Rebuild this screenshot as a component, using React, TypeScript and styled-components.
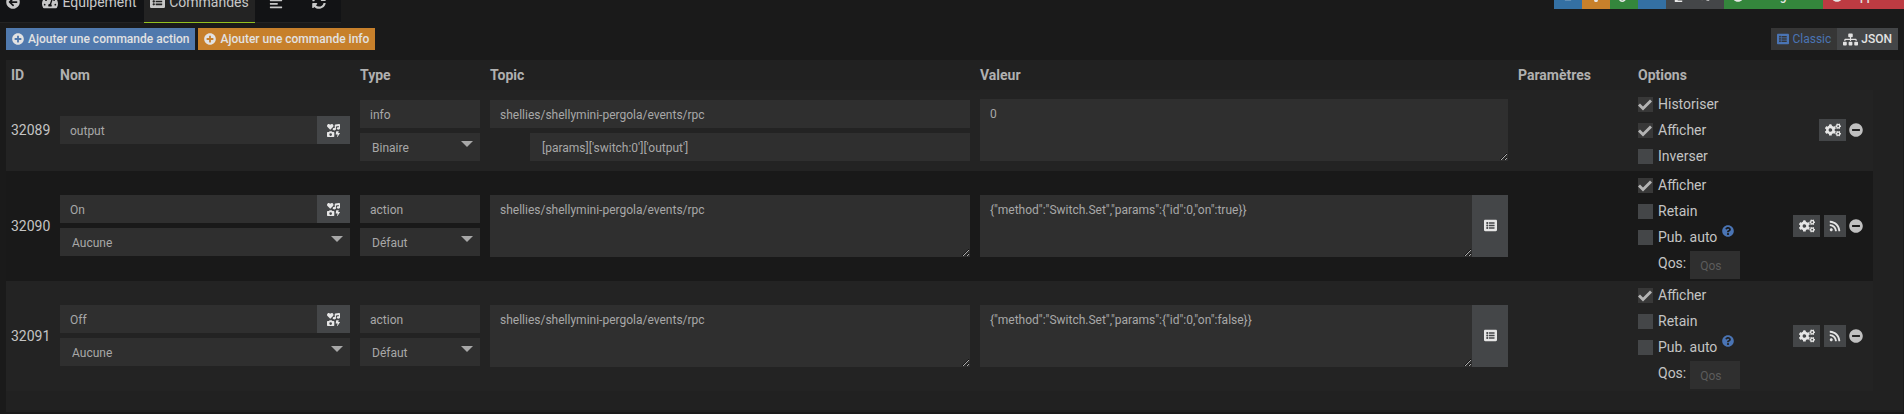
import React from 'react';
import styled, { createGlobalStyle, css } from 'styled-components';
import {
  FaAlignLeft, FaArrowCircleLeft, FaArrowsAltH, FaCheckCircle, FaCogs, FaCopy, FaIcons, FaLightbulb, FaListAlt,
  FaMinusCircle, FaPaperclip, FaPlusCircle, FaQuestionCircle, FaRss, FaSitemap, FaSyncAlt, FaTachometerAlt, FaUsers,
} from 'react-icons/fa';

const Global = createGlobalStyle`
  *, *::before, *::after { box-sizing: border-box; }
  body {
    margin: 0;
    background: #1a1a1a;
    color: #c4c4c4;
    font: 14px/20px Roboto, "Liberation Sans", sans-serif;
  }
  button, input, select, textarea { font: inherit; color: inherit; border: 0; border-radius: 0; margin: 0; }
  svg { flex: none; }
`;

const Header = styled.header`
  display: flex;
  justify-content: space-between;
  align-items: flex-start;
  height: 23px;
  overflow: hidden;
`;

const Tabs = styled.nav`
  display: flex;
  align-items: flex-end;
  height: 23px;
  margin-left: -9px;
`;

const Tab = styled.a<{ $active?: boolean; $wide: number }>`
  display: flex;
  flex: none;
  align-items: center;
  justify-content: center;
  gap: 4px;
  width: ${(p) => p.$wide}px;
  height: 42px;
  background: ${(p) => (p.$active ? '#232323' : '#121315')};
  border-bottom: 1px solid ${(p) => (p.$active ? '#94c11f' : '#232323')};
  color: #c8c8c8;
  text-decoration: none;
`;

const Actions = styled.div`
  display: flex;
  height: 9px;
  align-items: flex-end;
`;

const tones = {
  blue: '#3470a3',
  orange: '#c7802b',
  green: '#34863c',
  gray: '#444648',
  red: '#bd3b42',
};

const HeadButton = styled.button<{ $tone: keyof typeof tones; $wide: number }>`
  display: flex;
  align-items: center;
  gap: 3px;
  width: ${(p) => p.$wide}px;
  height: 26px;
  padding: 0 0 0 8px;
  background: ${(p) => tones[p.$tone]};
  color: #e6e6e6;
  font-size: 12px;
  font-weight: 500;
`;

const Toolbar = styled.div`
  display: flex;
  justify-content: space-between;
  padding: 5px 6px 10px;
`;

const Group = styled.div<{ $gap?: number }>`
  display: flex;
  gap: ${(p) => p.$gap ?? 0}px;
`;

const ToolButton = styled.button<{ $kind: 'action' | 'info' | 'muted' | 'plain' }>`
  display: flex;
  align-items: center;
  gap: 3px;
  height: 22px;
  padding: 0 6px;
  font-size: 12px;
  font-weight: 500;
  color: #e2e2e2;
  ${(p) => p.$kind === 'action' && css`background: #5079ad; gap: 4px;`}
  ${(p) => p.$kind === 'info' && css`background: #c7802b; gap: 4px;`}
  ${(p) => p.$kind === 'muted' && css`background: #363636; color: #4a74b4; font-weight: 400;`}
  ${(p) => p.$kind === 'plain' && css`background: #444648;`}
`;

const Panel = styled.main`
  margin: 0 1px 0 6px;
  padding: 0 30px 21px 0;
  background: #212121;
`;

const Table = styled.table`
  width: 100%;
  min-width: 1500px;
  table-layout: fixed;
  border-collapse: collapse;
`;

const Th = styled.th<{ $wide?: number }>`
  width: ${(p) => (p.$wide ? `${p.$wide}px` : 'auto')};
  height: 30px;
  padding: 0 5px;
  color: #b0b0b0;
  font-weight: 700;
  text-align: left;
`;

const Row = styled.tr`
  background: #232323;
  &:nth-child(even) { background: #191919; }
`;

const Td = styled.td`
  padding: 1px 5px 2px;
  vertical-align: middle;
`;

const Stack = styled.div`
  display: flex;
  flex-direction: column;
  gap: 5px;
`;

const Line = styled.div<{ $indent?: boolean }>`
  display: flex;
  padding-left: ${(p) => (p.$indent ? 40 : 0)}px;
`;

const field = css`
  display: block;
  flex: 0 1 auto;
  width: 100%;
  min-width: 0;
  background: #2f2f2f;
  color: #a8a8a8;
  font-size: 12px;
  line-height: 18px;
  outline: none;
`;

const Input = styled.input<{ $pad?: number }>`
  ${field}
  height: 28px;
  padding: 2px ${(p) => p.$pad ?? 10}px 0;
  &::placeholder { color: #5c5c5c; opacity: 1; }
`;

const Area = styled.textarea`
  ${field}
  height: 62px;
  padding: 6px 10px;
  resize: vertical;
`;

const SelectBox = styled.div`
  position: relative;
  &::after {
    content: '';
    position: absolute;
    top: 8px;
    right: 7px;
    border: 6px solid transparent;
    border-top-color: #a8a8a8;
    border-bottom: 0;
    pointer-events: none;
  }
`;

const Select = styled.select`
  ${field}
  height: 28px;
  padding: 2px 24px 0 12px;
  appearance: none;
`;

const Addon = styled.button<{ $wide: number }>`
  display: flex;
  flex: none;
  align-items: center;
  justify-content: center;
  width: ${(p) => p.$wide}px;
  padding: 0;
  background: #444648;
  color: #e6e6e6;
  font-size: 12px;
`;

const OptionsCell = styled.div`
  display: flex;
  align-items: center;
  justify-content: space-between;
`;

const Check = styled.label`
  display: flex;
  align-items: center;
  gap: 5px;
  height: 26px;
`;

const Box = styled.input`
  appearance: none;
  width: 15px;
  height: 15px;
  background: #444648;
  &:checked { background: #383838; }
  &:checked::before {
    content: '';
    display: block;
    width: 15px;
    height: 15px;
    background: #b4b4b4;
    clip-path: polygon(0 9px, 2px 7px, 5px 10px, 12px 3px, 14px 5px, 5px 14px);
  }
`;

const Help = styled.sup`
  display: flex;
  align-self: flex-start;
  margin-top: 1px;
  color: #4a74b4;
  font-size: 12px;
`;

const Qos = styled.label`
  display: flex;
  align-items: flex-start;
  gap: 4px;
  height: 29px;
  padding: 1px 0 0 20px;
  line-height: 24px;
`;

const QosField = styled.div`
  width: 50px;
`;

const RowActions = styled.div`
  display: flex;
  align-items: center;
  padding-right: 5px;
`;

const IconButton = styled.button<{ $wide: number; $gap: number }>`
  display: flex;
  align-items: center;
  justify-content: center;
  width: ${(p) => p.$wide}px;
  height: 22px;
  margin-right: ${(p) => p.$gap}px;
  padding: 0;
  background: #444648;
  color: #e6e6e6;
  font-size: 12px;
`;

const RemoveButton = styled.button`
  display: flex;
  padding: 0;
  background: none;
  color: #c0c0c0;
  font-size: 14px;
`;

type Option = { label: string; on?: boolean; help?: boolean };
type Command = {
  id: string;
  name: string;
  type: 'info' | 'action';
  subtype: string;
  topic: string;
  path?: string;
  value: string;
  options: Option[];
};

const TOPIC = 'shellies/shellymini-pergola/events/rpc';
const actionOptions: Option[] = [
  { label: 'Afficher', on: true },
  { label: 'Retain' },
  { label: 'Pub. auto', help: true },
];

const commands: Command[] = [
  {
    id: '32089', name: 'output', type: 'info', subtype: 'Binaire', topic: TOPIC,
    path: "[params]['switch:0']['output']", value: '0',
    options: [{ label: 'Historiser', on: true }, { label: 'Afficher', on: true }, { label: 'Inverser' }],
  },
  {
    id: '32090', name: 'On', type: 'action', subtype: 'Défaut', topic: TOPIC,
    value: '{"method":"Switch.Set","params":{"id":0,"on":true}}', options: actionOptions,
  },
  {
    id: '32091', name: 'Off', type: 'action', subtype: 'Défaut', topic: TOPIC,
    value: '{"method":"Switch.Set","params":{"id":0,"on":false}}', options: actionOptions,
  },
];

function Dropdown({ value, label }: { value: string; label: string }) {
  return (
    <SelectBox>
      <Select aria-label={label} defaultValue={value}>
        <option>{value}</option>
      </Select>
    </SelectBox>
  );
}

function CommandRow({ cmd }: { cmd: Command }) {
  const isAction = cmd.type === 'action';
  return (
    <Row>
      <Td>{cmd.id}</Td>
      <Td>
        <Stack>
          <Line>
            <Input aria-label="Nom" defaultValue={cmd.name} />
            <Addon $wide={33} aria-label="Icône"><FaIcons size={13} /></Addon>
          </Line>
          {isAction && <Dropdown label="Commande liée" value="Aucune" />}
        </Stack>
      </Td>
      <Td>
        <Stack>
          <Input aria-label="Type" defaultValue={cmd.type} />
          <Dropdown label="Sous-type" value={cmd.subtype} />
        </Stack>
      </Td>
      <Td>
        {isAction ? (
          <Area aria-label="Topic" defaultValue={cmd.topic} />
        ) : (
          <Stack>
            <Input aria-label="Topic" defaultValue={cmd.topic} />
            <Line $indent><Input aria-label="Chemin JSON" $pad={12} defaultValue={cmd.path} /></Line>
          </Stack>
        )}
      </Td>
      <Td>
        <Line>
          <Area aria-label="Valeur" defaultValue={cmd.value} />
          {isAction && <Addon $wide={36} aria-label="Choisir une commande"><FaListAlt size={13} /></Addon>}
        </Line>
      </Td>
      <Td />
      <Td>
        <OptionsCell>
          <div>
            {cmd.options.map((o) => (
              <Check key={o.label}>
                <Box type="checkbox" defaultChecked={o.on} />
                {o.label}
                {o.help && <Help><FaQuestionCircle /></Help>}
              </Check>
            ))}
            {isAction && (
              <Qos>
                Qos:
                <QosField><Input placeholder="Qos" /></QosField>
              </Qos>
            )}
          </div>
          <RowActions>
            <IconButton $wide={27} $gap={isAction ? 4 : 3} aria-label="Configurer"><FaCogs size={16} /></IconButton>
            {isAction && <IconButton $wide={22} $gap={3} aria-label="Tester"><FaRss /></IconButton>}
            <RemoveButton aria-label="Supprimer"><FaMinusCircle /></RemoveButton>
          </RowActions>
        </OptionsCell>
      </Td>
    </Row>
  );
}

export default function App() {
  return (
    <>
      <Global />
      <Header>
        <Tabs>
          <Tab href="#" $wide={44} aria-label="Retour"><FaArrowCircleLeft size={14} /></Tab>
          <Tab href="#" $wide={109}><FaTachometerAlt size={16} />Equipement</Tab>
          <Tab href="#" $wide={111} $active><FaListAlt size={15} />Commandes</Tab>
          <Tab href="#" $wide={42} aria-label="Aligner"><FaAlignLeft size={14} /></Tab>
          <Tab href="#" $wide={44} aria-label="Actualiser"><FaSyncAlt size={14} /></Tab>
        </Tabs>
        <Actions>
          <HeadButton $tone="blue" $wide={28} aria-label="Équipements"><FaUsers /></HeadButton>
          <HeadButton $tone="orange" $wide={28} aria-label="Suggestions"><FaLightbulb /></HeadButton>
          <HeadButton $tone="green" $wide={28} aria-label="Pièces jointes"><FaPaperclip /></HeadButton>
          <HeadButton $tone="blue" $wide={28} aria-label="Relations"><FaArrowsAltH /></HeadButton>
          <HeadButton $tone="gray" $wide={24} aria-label="Dupliquer"><FaCopy /></HeadButton>
          <HeadButton $tone="gray" $wide={34} aria-label="Configuration"><FaCogs /></HeadButton>
          <HeadButton $tone="green" $wide={99}><FaCheckCircle />Sauvegarder</HeadButton>
          <HeadButton $tone="red" $wide={81}><FaMinusCircle />Supprimer</HeadButton>
        </Actions>
      </Header>
      <Toolbar>
        <Group $gap={3}>
          <ToolButton $kind="action"><FaPlusCircle />Ajouter une commande action</ToolButton>
          <ToolButton $kind="info"><FaPlusCircle />Ajouter une commande info</ToolButton>
        </Group>
        <Group>
          <ToolButton $kind="muted"><FaListAlt />Classic</ToolButton>
          <ToolButton $kind="plain"><FaSitemap size={15} />JSON</ToolButton>
        </Group>
      </Toolbar>
      <Panel>
        <Table>
          <thead>
            <tr>
              <Th $wide={49}>ID</Th>
              <Th $wide={300}>Nom</Th>
              <Th $wide={130}>Type</Th>
              <Th $wide={490}>Topic</Th>
              <Th>Valeur</Th>
              <Th $wide={120}>Paramètres</Th>
              <Th $wide={240}>Options</Th>
            </tr>
          </thead>
          <tbody>
            {commands.map((c) => <CommandRow key={c.id} cmd={c} />)}
          </tbody>
        </Table>
      </Panel>
    </>
  );
}
